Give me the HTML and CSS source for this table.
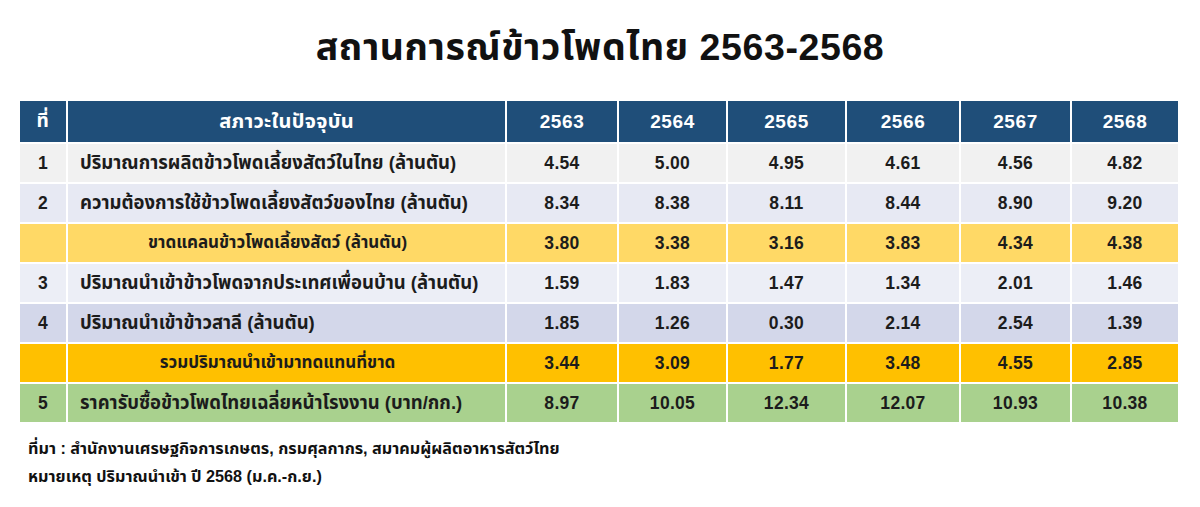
FILE: index.html
```html
<!DOCTYPE html>
<html lang="th">
<head>
<meta charset="utf-8">
<title>สถานการณ์ข้าวโพดไทย 2563-2568</title>
<link rel="stylesheet" href="styles.css">
</head>
<body>
<div class="page">
  <h1 class="title">สถานการณ์ข้าวโพดไทย 2563-2568</h1>
  <table class="data">
    <colgroup>
      <col class="c-no"><col class="c-label"><col class="c-y1"><col class="c-y2"><col class="c-y3"><col class="c-y4"><col class="c-y5"><col class="c-y6">
    </colgroup>
    <thead>
      <tr class="head">
        <th>ที่</th><th class="h-label">สภาวะในปัจจุบัน</th><th>2563</th><th>2564</th><th>2565</th><th>2566</th><th>2567</th><th>2568</th>
      </tr>
    </thead>
    <tbody>
      <tr class="r-grey">
        <td class="no">1</td><td class="label">ปริมาณการผลิตข้าวโพดเลี้ยงสัตว์ในไทย (ล้านตัน)</td>
        <td>4.54</td><td>5.00</td><td>4.95</td><td>4.61</td><td>4.56</td><td>4.82</td>
      </tr>
      <tr class="r-lav">
        <td class="no">2</td><td class="label">ความต้องการใช้ข้าวโพดเลี้ยงสัตว์ของไทย (ล้านตัน)</td>
        <td>8.34</td><td>8.38</td><td>8.11</td><td>8.44</td><td>8.90</td><td>9.20</td>
      </tr>
      <tr class="r-yellow">
        <td class="no"></td><td class="label center">ขาดแคลนข้าวโพดเลี้ยงสัตว์ (ล้านตัน)</td>
        <td>3.80</td><td>3.38</td><td>3.16</td><td>3.83</td><td>4.34</td><td>4.38</td>
      </tr>
      <tr class="r-lav2">
        <td class="no">3</td><td class="label">ปริมาณนำเข้าข้าวโพดจากประเทศเพื่อนบ้าน (ล้านตัน)</td>
        <td>1.59</td><td>1.83</td><td>1.47</td><td>1.34</td><td>2.01</td><td>1.46</td>
      </tr>
      <tr class="r-lav3">
        <td class="no">4</td><td class="label">ปริมาณนำเข้าข้าวสาลี (ล้านตัน)</td>
        <td>1.85</td><td>1.26</td><td>0.30</td><td>2.14</td><td>2.54</td><td>1.39</td>
      </tr>
      <tr class="r-orange">
        <td class="no"></td><td class="label center">รวมปริมาณนำเข้ามาทดแทนที่ขาด</td>
        <td>3.44</td><td>3.09</td><td>1.77</td><td>3.48</td><td>4.55</td><td>2.85</td>
      </tr>
      <tr class="r-green">
        <td class="no">5</td><td class="label">ราคารับซื้อข้าวโพดไทยเฉลี่ยหน้าโรงงาน (บาท/กก.)</td>
        <td>8.97</td><td>10.05</td><td>12.34</td><td>12.07</td><td>10.93</td><td>10.38</td>
      </tr>
    </tbody>
  </table>
  <div class="notes">
    <p>ที่มา : สำนักงานเศรษฐกิจการเกษตร, กรมศุลกากร, สมาคมผู้ผลิตอาหารสัตว์ไทย</p>
    <p>หมายเหตุ ปริมาณนำเข้า ปี 2568 (ม.ค.-ก.ย.)</p>
  </div>
</div>
</body>
</html>
```

FILE: styles.css
```css
html, body {
  margin: 0;
  padding: 0;
  background: #ffffff;
}
body {
  font-family: "Liberation Sans", "Noto Sans Thai", "Noto Sans", Tahoma, sans-serif;
  color: #1a1a1a;
}
.page {
  width: 1200px;
  height: 507px;
  overflow: hidden;
}
.title {
  margin: 0;
  height: 101px;
  display: flex;
  align-items: center;
  justify-content: center;
  padding-bottom: 4px;
  box-sizing: border-box;
  font-size: 37.5px;
  font-weight: 700;
  color: #111111;
  letter-spacing: 0.6px;
}
.data {
  margin-left: 18px;
  width: 1162px;
  table-layout: fixed;
  border-collapse: separate;
  border-spacing: 2px;
  margin-top: -2px;
}
.c-no { width: 46px; }
.c-label { width: 437px; }
.c-y1 { width: 110px; }
.c-y2 { width: 107px; }
.c-y3 { width: 117px; }
.c-y4 { width: 112px; }
.c-y5 { width: 109px; }
.c-y6 { width: 106px; }

.data th, .data td {
  padding: 0;
  text-align: center;
  vertical-align: middle;
  white-space: nowrap;
  overflow: hidden;
}
.head th {
  height: 41px;
  background: #1f4e79;
  color: #ffffff;
  font-size: 19px;
  font-weight: 700;
  letter-spacing: 0.6px;
}
.head th.h-label {
  font-size: 20px;
  letter-spacing: 0.3px;
}
.data td {
  height: 38px;
  font-size: 17.5px;
  font-weight: 700;
  color: #1c1c1c;
  letter-spacing: 0.3px;
}
.data td.label {
  text-align: left;
  padding-left: 12px;
  font-size: 18.5px;
  letter-spacing: 0;
}
.data td.label.center {
  text-align: center;
  padding-left: 0;
  padding-right: 18px;
  font-size: 17px;
}
.r-grey td { background: #f1f1f1; }
.r-lav td { background: #e7e9f3; }
.r-yellow td { background: #ffd966; }
.r-lav2 td { background: #eceef6; }
.r-lav3 td { background: #d3d7ea; }
.r-orange td { background: #ffc000; }
.r-green td { background: #a9d18e; }

.notes {
  padding-left: 28px;
  padding-top: 10px;
}
.notes p {
  margin: 0;
  font-size: 16.2px;
  font-weight: 700;
  line-height: 28px;
  color: #111111;
}
```
